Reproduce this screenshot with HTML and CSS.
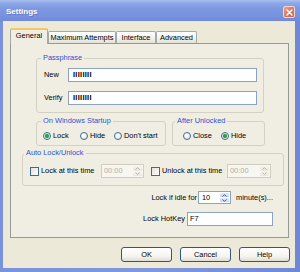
FILE: index.html
```html
<!DOCTYPE html>
<html>
<head>
<meta charset="utf-8">
<title>Settings</title>
<link rel="stylesheet" href="styles.css">
</head>
<body>
<div class="window">
  <div class="titlebar">
    <span class="title">Settings</span>
    <span class="close"><svg width="7" height="7" viewBox="0 0 7 7"><path d="M1 1L6 6M6 1L1 6" stroke="#fff" stroke-width="1.5" stroke-linecap="round"/></svg></span>
  </div>
  <div class="client">
    <div class="tabs">
      <div class="tab active t-general">General</div>
      <div class="tab t-max">Maximum Attempts</div>
      <div class="tab t-int">Interface</div>
      <div class="tab t-adv">Advanced</div>
    </div>
    <div class="panel">
      <fieldset class="group g-pass">
        <legend class="lg-pass">Passphrase</legend>
        <div class="pass-body">
          <div class="field-row"><span class="flabel">New</span><span class="input pw">IIIIIIII</span></div>
          <div class="field-row"><span class="flabel">Verify</span><span class="input pw">IIIIIIII</span></div>
        </div>
      </fieldset>
      <div class="pair">
        <fieldset class="group g-startup">
          <legend class="lg-startup">On Windows Startup</legend>
          <div class="radios startup-radios">
            <span class="opt"><span class="radio on"></span>Lock</span>
            <span class="opt"><span class="radio"></span>Hide</span>
            <span class="opt"><span class="radio"></span>Don't start</span>
          </div>
        </fieldset>
        <fieldset class="group g-after">
          <legend class="lg-after">After Unlocked</legend>
          <div class="radios after-radios">
            <span class="opt"><span class="radio"></span>Close</span>
            <span class="opt"><span class="radio on"></span>Hide</span>
          </div>
        </fieldset>
      </div>
      <fieldset class="group g-auto">
        <legend class="lg-auto">Auto Lock/Unlock</legend>
        <div class="auto-row">
          <span class="chk-opt chk-a"><span class="checkbox"></span>Lock at this time</span>
          <span class="spin time t-a disabled"><span class="spin-text">00:00</span><span class="spin-btns"><span class="sb"><svg width="5" height="3" viewBox="0 0 5 3"><path d="M0.5 2.6L2.5 0.6L4.5 2.6" fill="none" stroke="currentColor" stroke-width="1"/></svg></span><span class="sb"><svg width="5" height="3" viewBox="0 0 5 3"><path d="M0.5 0.4L2.5 2.4L4.5 0.4" fill="none" stroke="currentColor" stroke-width="1"/></svg></span></span></span>
          <span class="chk-opt chk-b"><span class="checkbox"></span>Unlock at this time</span>
          <span class="spin time t-b disabled"><span class="spin-text">00:00</span><span class="spin-btns"><span class="sb"><svg width="5" height="3" viewBox="0 0 5 3"><path d="M0.5 2.6L2.5 0.6L4.5 2.6" fill="none" stroke="currentColor" stroke-width="1"/></svg></span><span class="sb"><svg width="5" height="3" viewBox="0 0 5 3"><path d="M0.5 0.4L2.5 2.4L4.5 0.4" fill="none" stroke="currentColor" stroke-width="1"/></svg></span></span></span>
        </div>
      </fieldset>
      <div class="idle-row">
        <span class="idle-label">Lock if idle for</span>
        <span class="spin idle"><span class="spin-text">10</span><span class="spin-btns"><span class="sb"><svg width="5" height="3" viewBox="0 0 5 3"><path d="M0.5 2.6L2.5 0.6L4.5 2.6" fill="none" stroke="currentColor" stroke-width="1"/></svg></span><span class="sb"><svg width="5" height="3" viewBox="0 0 5 3"><path d="M0.5 0.4L2.5 2.4L4.5 0.4" fill="none" stroke="currentColor" stroke-width="1"/></svg></span></span></span>
        <span class="unit">minute(s)...</span>
      </div>
      <div class="hotkey-row">
        <span class="hk-label">Lock HotKey</span>
        <span class="input hk">F7</span>
      </div>
    </div>
    <div class="buttons">
      <span class="btn">OK</span>
      <span class="btn">Cancel</span>
      <span class="btn">Help</span>
    </div>
  </div>
</div>
</body>
</html>
```
FILE: styles.css
```css
* { box-sizing: border-box; }
html, body { margin: 0; padding: 0; }
body {
  width: 300px;
  height: 272px;
  overflow: hidden;
  font-family: "Liberation Sans", Arial, sans-serif;
  font-size: 7.4px;
  color: #000;
  background: #7b93dc;
}
.window {
  width: 300px;
  height: 272px;
  display: flex;
  flex-direction: column;
  background: linear-gradient(to right, #7a92dc, #8098df 50%, #6f88d6);
}
.titlebar {
  height: 21px;
  flex: none;
  display: flex;
  align-items: center;
  padding: 3px 5px 0 6px;
  background: linear-gradient(#aac0f0 0, #8ea7e8 3px, #7d97e0 9px, #7891de 16px, #7089d9 21px);
}
.title {
  flex: 1;
  color: #fff;
  font-weight: bold;
  font-size: 8px;
  line-height: 10px;
  text-shadow: 1px 1px 0 rgba(50, 70, 150, 0.35);
}
.close {
  width: 12px;
  height: 12px;
  border: 1px solid #f1d9d3;
  border-radius: 2px;
  background: linear-gradient(135deg, #eba08f, #d8705a 60%, #cf6450);
  display: flex;
  align-items: center;
  justify-content: center;
}
.client {
  flex: 1;
  margin: 0 5px 4px 3px;
  background: #ece9d8;
  padding: 7px 0 0 7px;
  display: flex;
  flex-direction: column;
}
.tabs {
  display: flex;
  align-items: flex-end;
  height: 15px;
}
.tab {
  height: 12px;
  padding-top: 1px;
  line-height: 10px;
  text-align: center;
  white-space: nowrap;
  border: 1px solid #a3aaae;
  border-bottom: none;
  border-radius: 2px 2px 0 0;
  background: linear-gradient(#ffffff, #f1f0ea 60%, #e4e2d8);
}
.tab.active {
  height: 16px;
  padding-top: 1px;
  margin-bottom: -1px;
  position: relative;
  z-index: 1;
  background: #f0eee3;
  border-top: 2px solid #f6c668;
}
.t-general { width: 38px; }
.t-max { width: 68px; }
.t-int { width: 40px; }
.t-adv { width: 41px; }
.panel {
  width: 279px;
  height: 195px;
  border: 1px solid #929b9c;
  background: #f0eee3;
  padding-top: 9px;
  display: flex;
  flex-direction: column;
}
.group {
  margin: 0;
  padding: 0;
  border: 1px solid #d3d1c2;
  border-radius: 3px;
  min-width: 0;
}
.group legend {
  padding: 0 2px;
  line-height: 10px;
  color: #2853cf;
}
.lg-pass, .lg-startup { margin-left: 4px; }
.lg-after { margin-left: 2px; }
.lg-auto { margin-left: 1px; }
.g-pass { margin-left: 25px; width: 228px; }
.pass-body {
  padding: 5px 6px 7px 7px;
  display: flex;
  flex-direction: column;
  gap: 9px;
}
.field-row {
  display: flex;
  align-items: center;
  height: 14px;
}
.flabel { width: 24px; line-height: 10px; }
.input {
  height: 14px;
  border: 1px solid #8ba3bf;
  background: #fff;
  line-height: 12px;
  white-space: nowrap;
}
.pw {
  flex: 1;
  padding-left: 4px;
  font-weight: bold;
  letter-spacing: 0.3px;
}
.pair {
  display: flex;
  gap: 6px;
  margin: 3px 0 0 25px;
}
.g-startup { width: 130px; }
.g-after { width: 93px; }
.radios {
  display: grid;
  align-items: center;
  height: 19px;
  padding: 5px 0 4px;
}
.startup-radios { grid-template-columns: 37px 34px auto; padding-left: 6px; }
.after-radios { grid-template-columns: 38px auto; padding-left: 10px; }
.opt {
  display: flex;
  align-items: center;
  gap: 2px;
  line-height: 10px;
  white-space: nowrap;
}
.radio {
  flex: none;
  width: 8px;
  height: 8px;
  border-radius: 50%;
  border: 1px solid #3d6b98;
  background: radial-gradient(circle at 35% 35%, #ffffff, #e2dfd4);
}
.radio.on {
  background: radial-gradient(circle, #2f9a3c 0, #3aa447 1.6px, #a8d8ab 2.3px, #ffffff 2.8px, #e6e4da);
}
.g-auto { margin: 2px 0 0 11px; width: 262px; }
.auto-row {
  display: flex;
  align-items: center;
  height: 27px;
  padding: 6px 0 7px 7px;
}
.chk-opt {
  display: flex;
  align-items: center;
  gap: 2px;
  line-height: 10px;
  white-space: nowrap;
}
.chk-a { width: 71px; }
.chk-b { width: 76px; margin-left: 7px; }
.checkbox {
  flex: none;
  width: 9px;
  height: 9px;
  border: 1px solid #3d6b98;
  background: linear-gradient(135deg, #e3e1d6, #ffffff);
}
.spin {
  display: flex;
  height: 14px;
  border: 1px solid #8ba3bf;
  background: #fff;
}
.spin-text {
  flex: 1;
  line-height: 12px;
  padding-left: 2px;
}
.spin-btns {
  flex: none;
  width: 10px;
  display: flex;
  flex-direction: column;
  gap: 1px;
  padding: 1px 1px 1px 0;
}
.sb {
  flex: 1;
  display: flex;
  align-items: center;
  justify-content: center;
  border-radius: 1px;
  background: linear-gradient(#e3ebfd, #c0d0f6);
  color: #4d6185;
}
.time.t-a { width: 43px; }
.time.t-b { width: 44px; }
.spin.disabled {
  border-color: #cfcdc0;
  background: #f7f6f1;
  color: #b1ae9f;
}
.spin.disabled .sb {
  background: linear-gradient(#f5f4ee, #e7e5dc);
  color: #b8b5a7;
}
.idle-row {
  display: flex;
  align-items: center;
  height: 13px;
  margin-top: 5px;
}
.idle-label { width: 186px; text-align: right; margin-right: 1px; line-height: 10px; }
.spin.idle { width: 33px; height: 13px; }
.spin.idle .spin-text { line-height: 11px; padding-left: 3px; }
.unit { margin-left: 5px; line-height: 10px; }
.hotkey-row {
  display: flex;
  align-items: center;
  height: 14px;
  margin-top: 8px;
}
.hk-label { width: 174px; text-align: right; margin-right: 2px; line-height: 10px; }
.hk { width: 86px; padding-left: 2px; }
.buttons {
  display: flex;
  justify-content: flex-end;
  gap: 8px;
  margin-top: 9px;
  padding-right: 5px;
}
.btn {
  width: 51px;
  height: 15px;
  border: 1px solid #35557f;
  border-radius: 3px;
  background: linear-gradient(#ffffff, #f5f4f0 65%, #dfdcd1);
  text-align: center;
  line-height: 13px;
}
```
